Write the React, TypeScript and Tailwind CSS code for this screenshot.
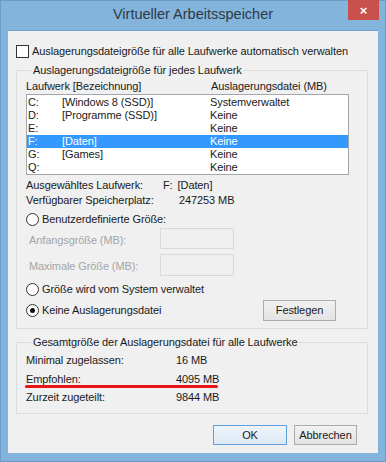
import React from "react";

const font = { fontFamily: '"Liberation Sans", Arial, sans-serif' };

function Radio({ checked }: { checked?: boolean }) {
  return (
    <span className="w-[13px] h-[13px] rounded-full border border-[#333] bg-white flex items-center justify-center shrink-0">
      {checked && <span className="w-[5px] h-[5px] rounded-full bg-[#111]" />}
    </span>
  );
}

const drives = [
  ["C:", "[Windows 8 (SSD)]", "Systemverwaltet"],
  ["D:", "[Programme (SSD)]", "Keine"],
  ["E:", "", "Keine"],
  ["F:", "[Daten]", "Keine"],
  ["G:", "[Games]", "Keine"],
  ["Q:", "", "Keine"],
];

export default function App() {
  return (
    <div
      className="w-[386px] h-[462px] bg-[#82b4dc] border border-[#6a9ccb] flex flex-col text-[11px] text-[#1a1a1a] tracking-[-0.1px]"
      style={font}
    >
      {/* Title bar */}
      <div className="h-[29px] relative flex justify-center shrink-0">
        <span className="text-[14.5px] text-[#2f3a44] tracking-normal pt-[4px] leading-[18px]">
          Virtueller Arbeitsspeicher
        </span>
        <div className="absolute right-[6px] top-[-1px] w-[31px] h-[20px] bg-[#c9514c] flex items-center justify-center text-white text-[13px] font-bold leading-none">
          ×
        </div>
      </div>

      {/* Client */}
      <div className="mx-[7px] h-[423px] bg-[#f0f0f0] border-t border-[#6f9fcc] flex flex-col pt-[12px]">
        <div className="flex items-center h-[16px] pl-[8px] gap-[3px]">
          <span className="w-[13px] h-[13px] border border-[#333] bg-white shrink-0" />
          <span className="leading-[16px]">Auslagerungsdateigröße für alle Laufwerke automatisch verwalten</span>
        </div>

        {/* Group 1 */}
        <fieldset className="mt-[3px] ml-[8px] mr-[10px] border border-[#dcdcdc] pl-[9px] pr-[18px] pb-[7px] min-w-0">
          <legend className="ml-[6px] px-[1px] leading-[16px]">Auslagerungsdateigröße für jedes Laufwerk</legend>
          <div className="flex leading-[16px] h-[16px]">
            <span className="w-[185px]">Laufwerk [Bezeichnung]</span>
            <span>Auslagerungsdatei (MB)</span>
          </div>
          <div className="border border-[#a3a6ab] bg-white pt-[1px]">
            {drives.map(([l, n, v]) => {
              const sel = l === "F:";
              return (
                <div
                  key={l}
                  className={
                    "grid grid-cols-[34px_148px_1fr] h-[13px] leading-[13px] pl-[1px] " +
                    (sel ? "bg-[#3399ff] text-white" : "")
                  }
                >
                  <span>{l}</span>
                  <span>{n}</span>
                  <span>{v}</span>
                </div>
              );
            })}
          </div>
          <div className="mt-[3px] grid grid-cols-[137px_1fr] leading-[15px]">
            <span>Ausgewähltes Laufwerk:</span>
            <span>
              F:<span className="ml-[5px]">[Daten]</span>
            </span>
            <span>Verfügbarer Speicherplatz:</span>
            <span className="pl-[16px]">247253 MB</span>
          </div>
          <div className="mt-[3px] flex items-center h-[16px] gap-[3px]">
            <Radio />
            <span>Benutzerdefinierte Größe:</span>
          </div>
          <div className="mt-[1px] flex items-center h-[21px] text-[#a5a5a5]">
            <span className="w-[134px] pl-[3px] pt-[4px]">Anfangsgröße (MB):</span>
            <span className="w-[74px] h-[21px] border border-[#d9d9d9] bg-[#f0f0f0]" />
          </div>
          <div className="mt-[5px] flex items-center h-[22px] text-[#a5a5a5]">
            <span className="w-[134px] pl-[3px] pt-[2px]">Maximale Größe (MB):</span>
            <span className="w-[74px] h-[22px] border border-[#d9d9d9] bg-[#f0f0f0]" />
          </div>
          <div className="mt-[5px] flex items-center h-[16px] gap-[3px]">
            <Radio />
            <span>Größe wird vom System verwaltet</span>
          </div>
          <div className="mt-[3px] flex items-center justify-between h-[21px]">
            <div className="flex items-center gap-[3px]">
              <Radio checked />
              <span>Keine Auslagerungsdatei</span>
            </div>
            <button className="w-[73px] h-[21px] border border-[#acacac] bg-gradient-to-b from-[#f2f2f2] to-[#e3e3e3] mr-[13px] leading-[19px]">
              Festlegen
            </button>
          </div>
        </fieldset>

        {/* Group 2 */}
        <fieldset className="mt-[5px] ml-[8px] mr-[10px] border border-[#dcdcdc] pl-[9px] pb-[7px] pt-[1px] min-w-0">
          <legend className="ml-[6px] px-[1px] leading-[16px]">Gesamtgröße der Auslagerungsdatei für alle Laufwerke</legend>
          <div className="grid grid-cols-[150px_1fr]">
            <span className="h-[19px] leading-[19px]">Minimal zugelassen:</span>
            <span className="h-[19px] leading-[19px]">16 MB</span>
            <div className="h-[18px] leading-[18px] col-span-2 relative grid grid-cols-[150px_1fr]">
              <span>Empfohlen:</span>
              <span>4095 MB</span>
              <span className="absolute left-[-1px] top-[15px] w-[193px] h-[3px] bg-[#e8141a] rounded-full" />
            </div>
            <span className="h-[18px] leading-[18px]">Zurzeit zugeteilt:</span>
            <span className="h-[18px] leading-[18px]">9844 MB</span>
          </div>
        </fieldset>

        <div className="mt-[11px] flex justify-end gap-[7px] pr-[21px]">
          <button className="w-[74px] h-[20px] border border-[#5ea1de] bg-gradient-to-b from-[#eef4fb] to-[#dde9f5] leading-[18px]">
            OK
          </button>
          <button className="w-[63px] h-[20px] border border-[#acacac] bg-gradient-to-b from-[#f2f2f2] to-[#e3e3e3] leading-[18px]">
            Abbrechen
          </button>
        </div>
      </div>
    </div>
  );
}
